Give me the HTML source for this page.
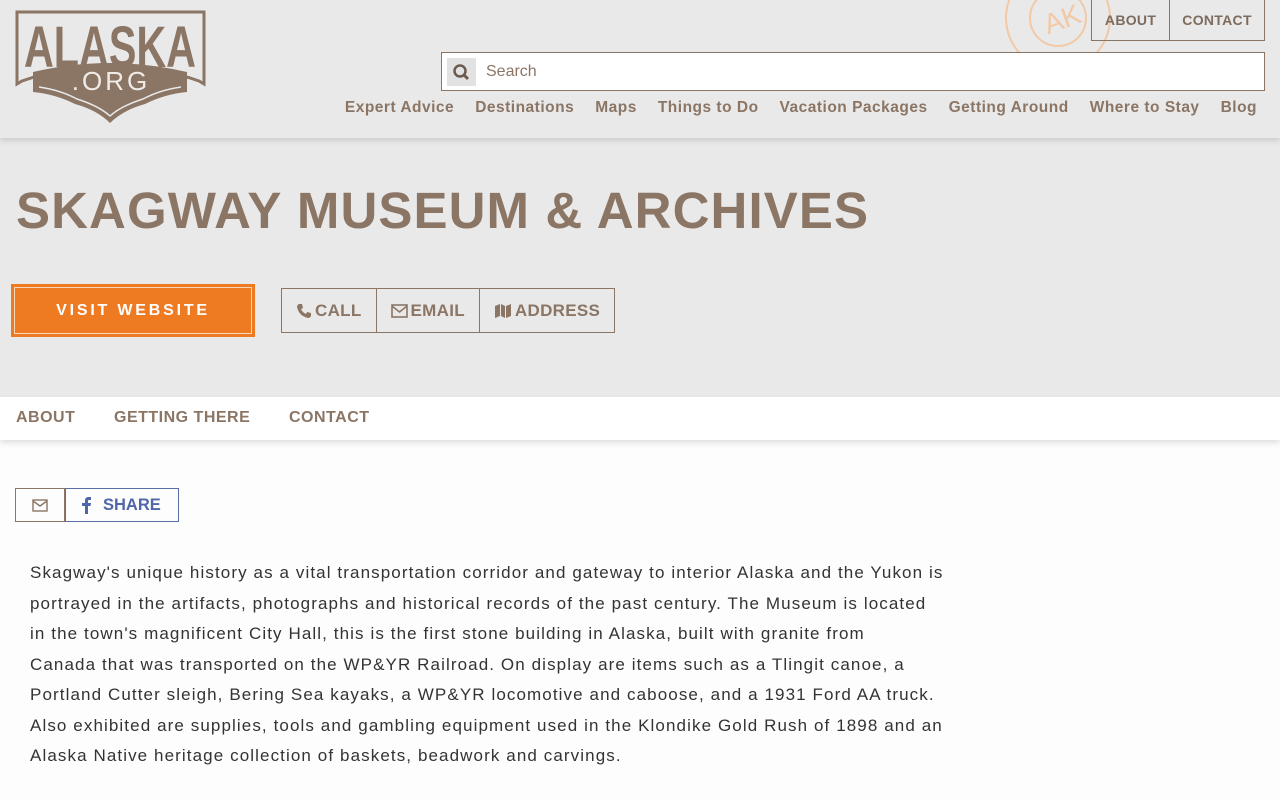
<!DOCTYPE html>
<html><head><meta charset="utf-8"><style>
*{box-sizing:border-box;margin:0;padding:0}
body{width:1280px;height:800px;overflow:hidden;background:#fdfdfd;font-family:"Liberation Sans",sans-serif;color:#8b7565;position:relative}
.hdr{position:absolute;left:0;top:0;width:1280px;height:138px;background:#e9e9e9;box-shadow:0 2px 6px rgba(0,0,0,.15);z-index:2}
.hero{position:absolute;left:0;top:138px;width:1280px;height:260px;background:#e9e9e9}
.topnav{position:absolute;top:0;left:1091px;width:174px;height:41px;display:flex;border:1px solid #8b7565;border-top:none}
.topnav div{padding:12px 0 0;font-size:14px;font-weight:bold;color:#7d6b5d;text-align:center;letter-spacing:.3px}
.topnav div+div{border-left:1px solid #8b7565}
.search{position:absolute;left:441px;top:52px;width:824px;height:39px;border:1px solid #8b7565;background:#fff}
.search span{position:absolute;left:44px;top:10px;font-size:16px;color:#8b7565}
.sicon{position:absolute;left:5px;top:5px;width:29px;height:28px;background:#e2e2e2}
.menu{position:absolute;top:99px;right:23px;display:flex;gap:21px;font-size:15.5px;font-weight:bold;letter-spacing:.5px;white-space:nowrap}
h1{position:absolute;left:16px;top:185px;font-size:51px;line-height:52px;letter-spacing:1.1px;font-weight:bold;color:#8b7565;white-space:nowrap}
.visit{position:absolute;left:11px;top:284px;width:244px;height:53px;background:#ee7b22}
.visit div{position:absolute;left:3px;top:3px;right:3px;bottom:3px;border:1.5px solid #f8d6b8;color:#fff;font-weight:bold;font-size:16px;letter-spacing:2.8px;text-align:center;line-height:45px}
.btns{position:absolute;left:281px;top:288px;height:45px;display:flex;border:1px solid #8b7565}
.btns div{padding:0 14px;line-height:43px;font-weight:bold;font-size:17px;display:flex;align-items:center;gap:3px;letter-spacing:.3px}
.btns div+div{border-left:1px solid #8b7565}
.sub{position:absolute;left:0;top:397px;width:1280px;height:43px;background:#fff;box-shadow:0 3px 6px rgba(0,0,0,.12);z-index:1}
.sub span{position:absolute;top:12px;font-size:16px;font-weight:bold;letter-spacing:.5px}
.share{position:absolute;left:15px;top:488px;height:34px;display:flex}
.share .m{width:50px;border:1px solid #8b7565;display:flex;align-items:center;justify-content:center}
.share .f{width:114px;border:1px solid #5a6fa6;color:#4f67a8;font-weight:bold;font-size:16.5px;display:flex;align-items:center;padding-left:16px;gap:12px}
.txt{position:absolute;left:30px;top:558px;width:1000px;font-size:17px;line-height:30.5px;color:#333;letter-spacing:1.1px;white-space:nowrap}
</style></head><body>
<div class="hdr">
<svg style="position:absolute;left:15px;top:10px" width="191" height="116" viewBox="0 0 191 116">
<path d="M2 2H189V74L184 71Q95 40 7 71L2 74Z" fill="none" stroke="#8b7565" stroke-width="3"/>
<path d="M18 62Q95 44 172 62V82Q150 84 130 94Q108 100 95 113Q82 100 60 94Q40 84 18 82Z" fill="#8b7565"/>
<path d="M24 77Q45 80 62 89Q84 96 95 106Q106 96 128 89Q145 80 166 77" fill="none" stroke="#e9e9e9" stroke-width="1.5"/>
<text x="95" y="57" text-anchor="middle" font-family="Liberation Sans Narrow,Liberation Sans" font-weight="bold" font-size="58" fill="#8b7565" textLength="172" lengthAdjust="spacingAndGlyphs">ALASKA</text>
<text x="96" y="80" text-anchor="middle" font-family="Liberation Sans" font-size="26" fill="#efece8" letter-spacing="3">.ORG</text>
</svg>
<svg style="position:absolute;left:1005px;top:-20px" width="108" height="80"><circle cx="53" cy="38" r="52" fill="none" stroke="#f1c9a6" stroke-width="2"/><circle cx="53" cy="38" r="28" fill="none" stroke="#f1c9a6" stroke-width="2"/><text x="38" y="50" font-size="28" fill="#f1c9a6" font-family="Liberation Sans" transform="rotate(-20 53 38)">AK</text></svg>
<div class="topnav"><div style="width:78px">ABOUT</div><div style="width:96px">CONTACT</div></div>
<div class="search"><div class="sicon"><svg width="29" height="28"><circle cx="13" cy="13" r="5.5" fill="none" stroke="#6b5a4d" stroke-width="2.5"/><path d="M17 17L21 21" stroke="#6b5a4d" stroke-width="3"/></svg></div><span>Search</span></div>
<div class="menu"><span>Expert Advice</span><span>Destinations</span><span>Maps</span><span>Things to Do</span><span>Vacation Packages</span><span>Getting Around</span><span>Where to Stay</span><span>Blog</span></div>
</div>
<div class="hero"></div>
<h1>SKAGWAY MUSEUM &amp; ARCHIVES</h1>
<div class="visit"><div>VISIT WEBSITE</div></div>
<div class="btns">
<div><svg width="16" height="16" viewBox="0 0 16 16"><path d="M3 1L6 1L7 5L5 6Q6 9 10 11L11 9L15 10V13Q14 15 12 15Q3 13 1 4Q1 2 3 1Z" fill="#8b7565"/></svg>CALL</div>
<div><svg width="17" height="14"><rect x="1" y="1" width="15" height="12" fill="none" stroke="#8b7565" stroke-width="1.6"/><path d="M1 2L8.5 8L16 2" fill="none" stroke="#8b7565" stroke-width="1.6"/></svg>EMAIL</div>
<div><svg width="18" height="15"><path d="M1 3L6 1V13L1 15ZM7 1L11 3V15L7 13ZM12 3L17 1V13L12 15Z" fill="#8b7565"/></svg>ADDRESS</div>
</div>
<div class="sub"><span style="left:16px">ABOUT</span><span style="left:114px">GETTING THERE</span><span style="left:289px">CONTACT</span></div>
<div class="share"><div class="m"><svg width="16" height="13"><rect x="1" y="1" width="14" height="11" fill="none" stroke="#8b7565" stroke-width="1.4"/><path d="M1 2L8 7L15 2" fill="none" stroke="#8b7565" stroke-width="1.4"/></svg></div><div class="f"><svg width="9" height="17" viewBox="0 0 9 17"><path d="M6 17V9H8.5L9 6H6V4Q6 3 7 3H9V0H6.5Q3 0 3 3.5V6H0V9H3V17Z" fill="#4f67a8"/></svg>SHARE</div></div>
<div class="txt">Skagway's unique history as a vital transportation corridor and gateway to interior Alaska and the Yukon is<br>portrayed in the artifacts, photographs and historical records of the past century. The Museum is located<br>in the town's magnificent City Hall, this is the first stone building in Alaska, built with granite from<br>Canada that was transported on the WP&amp;YR Railroad. On display are items such as a Tlingit canoe, a<br>Portland Cutter sleigh, Bering Sea kayaks, a WP&amp;YR locomotive and caboose, and a 1931 Ford AA truck.<br>Also exhibited are supplies, tools and gambling equipment used in the Klondike Gold Rush of 1898 and an<br>Alaska Native heritage collection of baskets, beadwork and carvings.</div>
</body></html>
